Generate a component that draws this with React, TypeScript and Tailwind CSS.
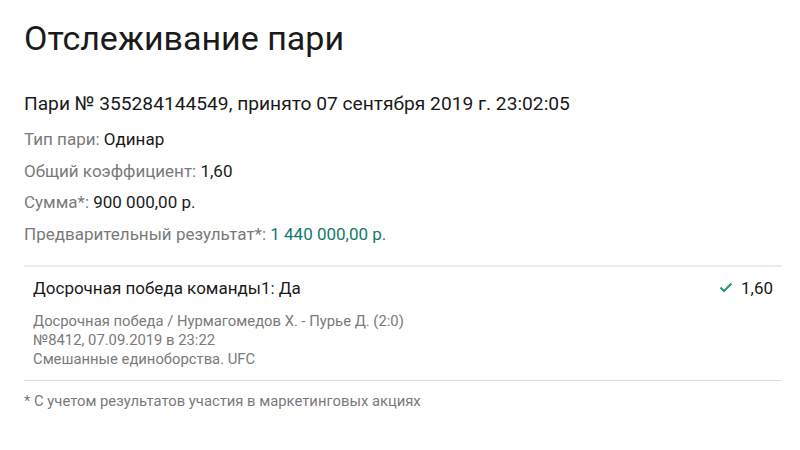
import React from "react";

const rows = [
  { label: "Тип пари:", value: "Одинар" },
  { label: "Общий коэффициент:", value: "1,60" },
  { label: "Сумма*:", value: "900 000,00 р." },
  { label: "Предварительный результат*:", value: "1 440 000,00 р.", accent: true },
];

const CheckIcon = () => (
  <svg width="14" height="11" viewBox="0 0 14 11" className="mr-[8px]">
    <path d="M1.5 5.5 L5 9 L12.5 1.5" fill="none" stroke="#1e9a62" strokeWidth="2" />
  </svg>
);

export default function App() {
  return (
    <div className="w-[800px] h-[450px] bg-white pl-6 pr-[18px] pt-[15px] text-[#1a1a1a] font-['Roboto',sans-serif]">
      <h1 className="text-[34px] leading-[46px]">Отслеживание пари</h1>
      <p className="mt-[30px] text-[19.2px] leading-[26px]">
        Пари № 355284144549, принято 07 сентября 2019 г. 23:02:05
      </p>
      <div className="mt-[7px]">
        {rows.map((r) => (
          <div key={r.label} className="text-[17px] leading-[31.7px]">
            <span className="text-[#7a7a7a]">{r.label} </span>
            <span className={r.accent ? "text-[#137a6b]" : ""}>{r.value}</span>
          </div>
        ))}
      </div>
      <div className="mt-[14px] border-t-2 border-[#ebebeb]">
        <div className="px-[9px] pt-[9px] pb-[11px]">
          <div className="flex items-center justify-between text-[17px] leading-[24px]">
            <span>Досрочная победа команды1: Да</span>
            <span className="flex items-center">
              <CheckIcon />
              1,60
            </span>
          </div>
          <div className="mt-[12px] text-[14.8px] leading-[19px] text-[#7a7a7a]">
            <div>Досрочная победа / Нурмагомедов Х. - Пурье Д. (2:0)</div>
            <div>№8412, 07.09.2019 в 23:22</div>
            <div>Смешанные единоборства. UFC</div>
          </div>
        </div>
      </div>
      <div className="border-t border-[#e0e0e0] pt-[10px] text-[14.8px] leading-[20px] text-[#7a7a7a]">
        * С учетом результатов участия в маркетинговых акциях
      </div>
    </div>
  );
}
